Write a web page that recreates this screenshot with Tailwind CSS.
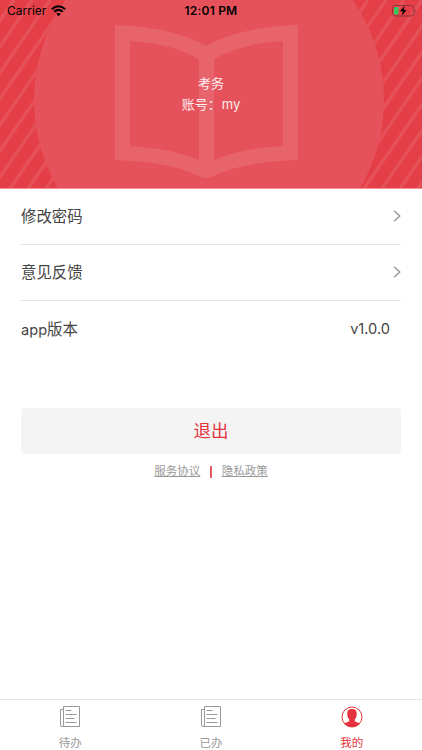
<!DOCTYPE html>
<html lang="zh-CN">
<head>
  <meta charset="UTF-8">
  <meta name="viewport" content="width=device-width, initial-scale=1.0">
  <title>我的</title>
  <script src="https://cdn.jsdelivr.net/npm/@tailwindcss/browser@4"></script>
</head>
<body class="bg-white font-['Inter','Noto_Sans_CJK_SC',sans-serif]">
  <div class="w-[422px] h-[750px] flex flex-col overflow-hidden">
    <!-- Header -->
    <header class="relative h-[189px] shrink-0 overflow-hidden bg-[#e43e47]">
      <svg class="absolute inset-0" width="422" height="189" viewBox="0 0 422 189">
        <g stroke="#e65059" stroke-width="3.6">
          <path d="M14 0l-131 190M32 0l-131 190M50 0l-131 190M68 0l-131 190M86 0l-131 190M104 0l-131 190M122 0l-131 190M140 0l-131 190M158 0l-131 190M176 0l-131 190"/>
          <path d="M368 0l-131 190M386 0l-131 190M404 0l-131 190M422 0l-131 190M440 0l-131 190M458 0l-131 190M476 0l-131 190M494 0l-131 190M512 0l-131 190M530 0l-131 190M548 0l-131 190"/>
        </g>
        <circle cx="209" cy="100" r="175" fill="#e6525b"/>
        <path fill="#e8646c" fill-rule="evenodd" d="M115 25Q173 27 206 46Q240 27 298 25V160Q240 162 211 177Q206 179 201 177Q173 162 115 160ZM130 41V146Q170 148 199 160V59Q170 43 130 41ZM283 41Q243 43 214 59V160Q243 148 283 146Z"/>
        <path d="M0 188.5H422" stroke="#f0949a"/>
      </svg>
      <!-- Status bar -->
      <div class="relative h-[22px] px-[7px] grid grid-cols-3 items-center text-black text-[12px]">
        <div class="flex items-center gap-[5px]">
          <span>Carrier</span>
          <svg width="15" height="12" viewBox="0 0 15 12" fill="none" stroke="currentColor" stroke-width="2">
            <path d="M.8 4.2Q7.5 -1.8 14.2 4.2M3.2 6.8Q7.5 3 11.8 6.8"/>
            <path d="M5.2 8.8Q7.5 7 9.8 8.8L7.5 11.3Z" fill="currentColor" stroke="none"/>
          </svg>
        </div>
        <span class="text-center font-semibold tracking-[.2px]">12:01 PM</span>
        <svg class="justify-self-end -mr-[2px]" width="25" height="12" viewBox="0 0 25 12">
          <rect x=".5" y=".5" width="21.5" height="10.5" rx="3" fill="none" stroke="#8e343a"/>
          <rect x="2" y="2" width="4.5" height="7.5" rx="1" fill="#34c759"/>
          <path d="M12.6 1L8 6.3H10.9L9.9 10.6L14.6 5H11.8Z" fill="#000"/>
          <path d="M23.3 4V7.5Q24.7 5.8 23.3 4Z" fill="#8e343a"/>
        </svg>
      </div>
      <div class="relative mt-[51px] flex flex-col items-center text-white/90 text-[13px] leading-[21px]">
        <p>考务</p>
        <p>账号：<span class="ml-px">my</span></p>
      </div>
    </header>

    <!-- Settings -->
    <main class="grow px-[21px] text-[#444]">
      <ul class="text-[15.4px]">
        <li class="h-14 flex items-center justify-between border-b border-[#e6e6e6]">
          <span>修改密码</span>
          <svg class="-mt-[2px]" width="8" height="12" viewBox="0 0 8 12" fill="none" stroke="#999" stroke-width="1.5"><path d="M1 .7L6.7 6L1 11.3"/></svg>
        </li>
        <li class="h-14 flex items-center justify-between border-b border-[#e6e6e6]">
          <span>意见反馈</span>
          <svg class="-mt-[2px]" width="8" height="12" viewBox="0 0 8 12" fill="none" stroke="#999" stroke-width="1.5"><path d="M1 .7L6.7 6L1 11.3"/></svg>
        </li>
        <li class="h-[57px] flex items-center justify-between pr-[11px]">
          <span><span class="text-[14.6px]">app</span>版本</span>
          <span class="text-[14.6px]">v1.0.0</span>
        </li>
      </ul>
      <button class="mt-[50px] w-full h-[46px] rounded-[4px] bg-[#f4f4f4] text-[#e5333d] text-[17.5px]">退出</button>
      <div class="mt-[9px] flex items-center justify-center text-[11.5px] leading-[17px] text-[#999]">
        <a class="underline">服务协议</a>
        <span class="mx-[10px] w-[1.5px] h-3 bg-[#ea5a62]"></span>
        <a class="underline">隐私政策</a>
      </div>
    </main>

    <!-- Tab bar -->
    <nav class="h-[51px] shrink-0 grid grid-cols-3 border-t border-[#e6e6e6] text-[#999] text-[11.5px] leading-[16px]">
      <a class="flex flex-col items-center pt-[6px] gap-[7px]">
        <svg width="22" height="22" viewBox="0 0 22 22" fill="none" stroke="#999">
          <path d="M4.5 .5H20.5V20.5H3Q1.5 20.5 1.5 19V3.5H4.5M4.5 .5V19Q4.5 20.5 3 20.5M6.5 4.5H12.5M6.5 8.5H17.5M6.5 12.5H15.5M6.5 16.5H17.5"/>
        </svg>
        <span>待办</span>
      </a>
      <a class="flex flex-col items-center pt-[6px] gap-[7px]">
        <svg width="22" height="22" viewBox="0 0 22 22" fill="none" stroke="#999">
          <path d="M4.5 .5H20.5V20.5H3Q1.5 20.5 1.5 19V3.5H4.5M4.5 .5V19Q4.5 20.5 3 20.5M6.5 4.5H12.5M6.5 8.5H17.5M6.5 12.5H15.5M6.5 16.5H17.5"/>
        </svg>
        <span>已办</span>
      </a>
      <a class="flex flex-col items-center pt-[6px] gap-[7px] text-[#e5333d]">
        <svg width="22" height="22" viewBox="0 0 22 22">
          <circle cx="11" cy="11" r="10" fill="none" stroke="#e5333d"/>
          <path fill="#e5333d" d="M11 3C7.3 3 5.9 5.2 6.3 8.5C6.4 10.7 7 12.2 8.2 13.3V15.2Q7 16.2 3 17.2Q6.2 21 11 21T19 17.2Q15 16.2 13.8 15.2V13.3C15 12.2 15.6 10.7 15.7 8.5C16.1 5.2 14.7 3 11 3Z"/>
        </svg>
        <span>我的</span>
      </a>
    </nav>
  </div>
</body>
</html>
